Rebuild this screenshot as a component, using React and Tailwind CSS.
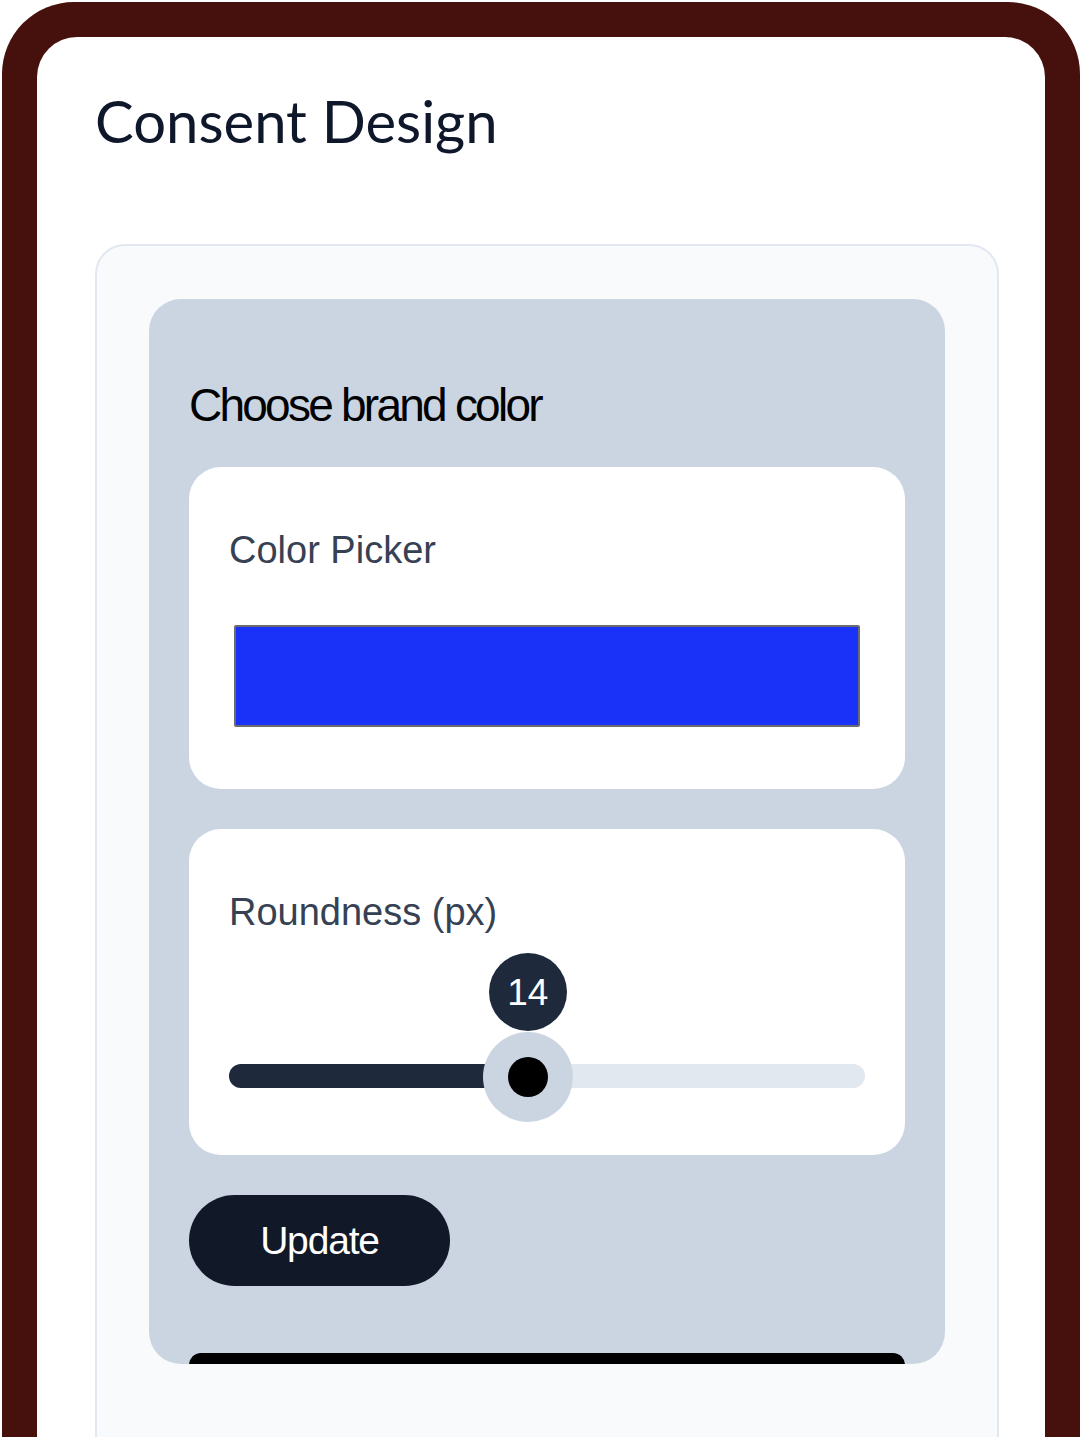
const ROUNDNESS = 14;
const ROUNDNESS_MAX = 30;

function RoundnessSlider({ value, max }) {
  const pct = (value / max) * 100;

  return (
    <div className="relative mt-[22px] h-[170px]">
      {/* track */}
      <div className="absolute left-0 right-0 top-[111px] h-[24px] overflow-hidden rounded-full bg-[#e2e8f0]">
        <div className="h-full bg-[#1e293b]" style={{ width: `${pct}%` }} />
      </div>
      {/* value bubble */}
      <div
        className="absolute top-0 flex h-[78px] w-[78px] -translate-x-1/2 items-center justify-center rounded-full bg-[#1e293b] text-[37px] leading-none text-white"
        style={{ left: `calc(${pct}% + 2px)` }}
      >
        {value}
      </div>
      {/* thumb */}
      <div
        className="absolute top-[79px] flex h-[90px] w-[90px] -translate-x-1/2 items-center justify-center rounded-full bg-[#cbd5e1]"
        style={{ left: `calc(${pct}% + 2px)` }}
      >
        <div className="h-[40px] w-[40px] rounded-full bg-black" />
      </div>
    </div>
  );
}

export default function App() {
  return (
    <div
      className="h-[1437px] overflow-hidden bg-white pl-[2px] pt-[2px]"
      style={{ fontFamily: '"Liberation Sans", Arial, sans-serif' }}
    >
      <div className="h-full rounded-t-[72px] bg-[#46100c] px-[35px] pt-[35px]">
        <div className="h-full rounded-t-[40px] bg-white pl-[58px] pr-[46px] pt-[55px]">
          <h1
            className="text-[58px] leading-none text-[#0f172a]"
            style={{ fontFamily: 'Lato, "Noto Sans", sans-serif' }}
          >
            Consent Design
          </h1>

          {/* outer panel */}
          <div className="mt-[94px] h-[1300px] rounded-[30px] border-2 border-[#e2e8f0] bg-[#f8fafc] px-[52px] pt-[53px]">
            {/* brand settings card */}
            <div className="h-[1065px] overflow-hidden rounded-[32px] bg-[#cbd5e1] px-10">
              <h2 className="mt-[83px] text-[46px] leading-none tracking-[-0.06em] text-black">
                Choose brand color
              </h2>

              <div className="mt-[39px] rounded-[32px] bg-white px-10 pb-[62px] pt-[64px]">
                <p className="text-[38px] leading-none text-gray-700">Color Picker</p>
                <div className="mx-[5px] mt-[56px] h-[102px] rounded-[2px] border-2 border-[#6b6b70] bg-[#1a32f8]" />
              </div>

              <div className="mt-10 rounded-[32px] bg-white px-10 pb-[32px] pt-[64px]">
                <p className="text-[38px] leading-none text-gray-700">Roundness (px)</p>
                <RoundnessSlider value={ROUNDNESS} max={ROUNDNESS_MAX} />
              </div>

              <button className="mt-10 flex h-[91px] w-[261px] items-center justify-center rounded-full bg-[#111827] text-[39px] leading-none tracking-[-0.03em] text-white">
                Update
              </button>

              {/* preview bar peeking from below */}
              <div className="mt-[67px] h-[40px] rounded-t-xl bg-black" />
            </div>
          </div>
        </div>
      </div>
    </div>
  );
}
